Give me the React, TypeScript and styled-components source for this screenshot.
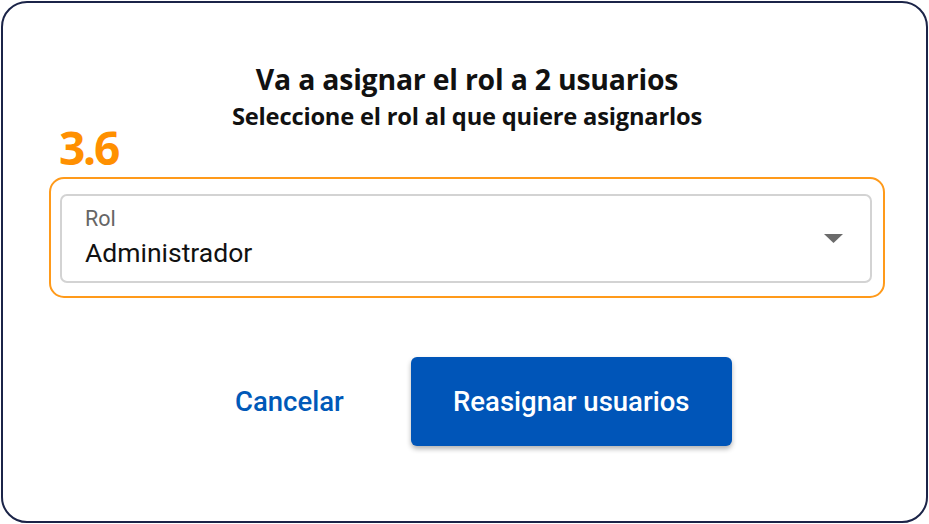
import styled, { createGlobalStyle } from "styled-components";

const Global = createGlobalStyle`
  html, body { margin: 0; padding: 0; background: #ffffff; }
  * { box-sizing: border-box; }
`;

const Frame = styled.div`
  width: 927px;
  height: 522px;
  margin: 1px;
  border: 2px solid #1b2448;
  border-radius: 26px;
  background: #ffffff;
  display: flex;
  flex-direction: column;
  padding: 58px 0 0 46px;
`;

const Heading = styled.div`
  width: 836px;
  display: flex;
  flex-direction: column;
  align-items: center;
  font-family: "Open Sans", "Noto Sans", sans-serif;
  font-weight: 700;
  color: #111111;
`;

const Title = styled.h1`
  margin: 0;
  font-size: 28.4px;
  line-height: 36px;
  font-weight: 700;
  letter-spacing: -0.2px;
`;

const Subtitle = styled.h2`
  margin: 5px 0 0;
  font-size: 23.7px;
  line-height: 28px;
  font-weight: 700;
  letter-spacing: -0.2px;
`;

const StepLabel = styled.div`
  margin: -6px 0 0 10px;
  font-family: "Open Sans", "Noto Sans", sans-serif;
  font-weight: 700;
  font-size: 46px;
  line-height: 46px;
  height: 46px;
  color: #ff9000;
  letter-spacing: -2.2px;
`;

const Highlight = styled.div`
  margin-top: 7px;
  width: 836px;
  height: 121px;
  border: 2px solid #ff9a1a;
  border-radius: 15px;
  padding: 15px 11px 0 9px;
`;

const Select = styled.div`
  height: 89px;
  border: 2px solid #d3d3d3;
  border-radius: 7px;
  display: flex;
  align-items: center;
  justify-content: space-between;
  padding: 0 27px 0 23px;
  font-family: "Roboto", "Noto Sans", sans-serif;
`;

const Field = styled.div`
  display: flex;
  flex-direction: column;
  margin-top: -2px;
`;

const FieldLabel = styled.span`
  font-size: 21.5px;
  line-height: 26px;
  color: #666666;
`;

const FieldValue = styled.span`
  margin-top: 5px;
  font-size: 26.5px;
  line-height: 32px;
  color: #111111;
`;

const Caret = styled.svg`
  width: 19px;
  height: 9px;
  display: block;
`;

const Actions = styled.div`
  margin-top: 59px;
  padding-left: 186px;
  display: flex;
  align-items: center;
  gap: 67px;
  font-family: "Roboto", "Noto Sans", sans-serif;
`;

const TextButton = styled.button`
  border: none;
  background: none;
  padding: 0;
  font-family: inherit;
  font-size: 27.5px;
  font-weight: 500;
  color: #0059b8;
  cursor: pointer;
`;

const PrimaryButton = styled.button`
  width: 321px;
  height: 89px;
  border: none;
  border-radius: 6px;
  background: #0055b8;
  color: #ffffff;
  font-family: inherit;
  font-size: 27.5px;
  font-weight: 500;
  box-shadow: 0 3px 5px rgba(0, 0, 0, 0.3);
  cursor: pointer;
`;

export default function App() {
  return (
    <>
      <Global />
      <Frame>
        <Heading>
          <Title>Va a asignar el rol a 2 usuarios</Title>
          <Subtitle>Seleccione el rol al que quiere asignarlos</Subtitle>
        </Heading>
        <StepLabel>3.6</StepLabel>
        <Highlight>
          <Select>
            <Field>
              <FieldLabel>Rol</FieldLabel>
              <FieldValue>Administrador</FieldValue>
            </Field>
            <Caret viewBox="0 0 19 9">
              <path d="M0 0 L19 0 L9.5 9 Z" fill="#6b6b6b" />
            </Caret>
          </Select>
        </Highlight>
        <Actions>
          <TextButton>Cancelar</TextButton>
          <PrimaryButton>Reasignar usuarios</PrimaryButton>
        </Actions>
      </Frame>
    </>
  );
}
